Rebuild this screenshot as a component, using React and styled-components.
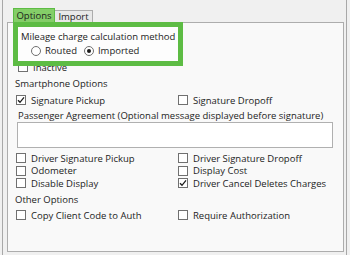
import React from "react";
import styled, { createGlobalStyle } from "styled-components";

const Global = createGlobalStyle`
  html, body { margin: 0; padding: 0; background: #f0f0f0; }
  body { font-family: "Open Sans", "Noto Sans", sans-serif; font-size: 9.5px; color: #1c1c1c; }
  * { box-sizing: border-box; }
`;

const Frame = styled.div`
  width: 345px;
  height: 255px;
  margin-left: 2px;
  border-left: 1px solid #a8a8a8;
  border-right: 1px solid #a8a8a8;
  padding: 0 2px 3px 4px;
  display: flex;
  flex-direction: column;
`;

const TabStrip = styled.div`
  height: 22px;
  display: flex;
  align-items: flex-end;
  padding-left: 6px;
`;

const Tab = styled.div`
  height: ${(p) => (p.$active ? "14px" : "12px")};
  width: ${(p) => (p.$active ? "42px" : "38px")};
  background: ${(p) => (p.$active ? "#84ce68" : "#e8e8e8")};
  border: 1px solid ${(p) => (p.$active ? "#5dbc44" : "#acacac")};
  border-bottom: none;
  border-left: ${(p) => (p.$active ? "1px solid #5dbc44" : "none")};
  display: flex;
  align-items: center;
  justify-content: center;
  line-height: 1;
`;

const Panel = styled.div`
  flex: 1;
  border: 1px solid #adadad;
  background: #f9f9f9;
  padding: 0 10px 0 7px;
  display: flex;
  flex-direction: column;
`;

const Highlight = styled.div`
  position: relative;
  z-index: 1;
  width: 170px;
  height: 44px;
  margin: -1px 0 0 -2px;
  border: 5px solid #5dbc44;
  background: #fdfdfd;
  padding: 4px 0 0 3px;
  display: flex;
  flex-direction: column;
`;

const Line = styled.div`
  height: 12px;
  line-height: 12px;
  white-space: nowrap;
  margin-left: ${(p) => p.$indent || 0}px;
  margin-top: ${(p) => p.$top || 0}px;
`;

const RadioRow = styled.div`
  display: flex;
  align-items: center;
  height: 13px;
  margin-top: 1px;
  padding-left: 10px;
`;

const RadioItem = styled.label`
  display: flex;
  align-items: center;
  gap: 4px;
  margin-right: 7px;
  white-space: nowrap;
`;

const RadioCircle = styled.span`
  width: 10px;
  height: 10px;
  border-radius: 50%;
  border: 1px solid #6f6f6f;
  background: #fff;
  display: flex;
  align-items: center;
  justify-content: center;
  &::after {
    content: "";
    width: 4px;
    height: 4px;
    border-radius: 50%;
    background: ${(p) => (p.$checked ? "#1c1c1c" : "transparent")};
  }
`;

const CheckRow = styled.label`
  display: flex;
  align-items: center;
  gap: 5px;
  height: ${(p) => p.$h || 12}px;
  white-space: nowrap;
  margin-left: ${(p) => p.$indent || 0}px;
  margin-top: ${(p) => p.$top || 0}px;
`;

const Box = styled.span`
  width: 10px;
  height: 10px;
  flex: none;
  border: 1px solid #707070;
  background: #fff;
  display: flex;
  align-items: center;
  justify-content: center;
`;

const Grid = styled.div`
  display: grid;
  grid-template-columns: 162px 1fr;
  grid-auto-rows: ${(p) => p.$row || 12}px;
  padding-left: 1px;
  margin-top: ${(p) => p.$top || 0}px;
`;

const TextBox = styled.div`
  width: 316px;
  height: 26px;
  margin-left: 2px;
  border: 1px solid #b0b0b0;
  background: #fff;
`;

const Check = ({ checked }) => (
  <Box>
    {checked && (
      <svg width="8" height="8" viewBox="0 0 8 8">
        <path d="M1 4.2 L3 6.3 L7 1.4" fill="none" stroke="#1c1c1c" strokeWidth="1.3" />
      </svg>
    )}
  </Box>
);

const CB = ({ label, checked, ...rest }) => (
  <CheckRow {...rest}>
    <Check checked={checked} />
    <span>{label}</span>
  </CheckRow>
);

export default function App() {
  return (
    <>
      <Global />
      <Frame>
        <TabStrip>
          <Tab $active>Options</Tab>
          <Tab>Import</Tab>
        </TabStrip>
        <Panel>
          <Highlight>
            <Line>Mileage charge calculation method</Line>
            <RadioRow>
              <RadioItem>
                <RadioCircle />
                Routed
              </RadioItem>
              <RadioItem>
                <RadioCircle $checked />
                Imported
              </RadioItem>
            </RadioRow>
          </Highlight>
          <CB label="Inactive" $indent={3} $top={-5} />
          <Line $top={5}>Smartphone Options</Line>
          <Grid $top={4}>
            <CB label="Signature Pickup" checked />
            <CB label="Signature Dropoff" />
          </Grid>
          <Line $indent={3} $top={4}>
            Passenger Agreement (Optional message displayed before signature)
          </Line>
          <TextBox />
          <Grid $top={4} $row={12.5}>
            <CB label="Driver Signature Pickup" />
            <CB label="Driver Signature Dropoff" />
            <CB label="Odometer" />
            <CB label="Display Cost" />
            <CB label="Disable Display" />
            <CB label="Driver Cancel Deletes Charges" checked />
          </Grid>
          <Line $top={4}>Other Options</Line>
          <Grid $top={3.5}>
            <CB label="Copy Client Code to Auth" />
            <CB label="Require Authorization" />
          </Grid>
        </Panel>
      </Frame>
    </>
  );
}
